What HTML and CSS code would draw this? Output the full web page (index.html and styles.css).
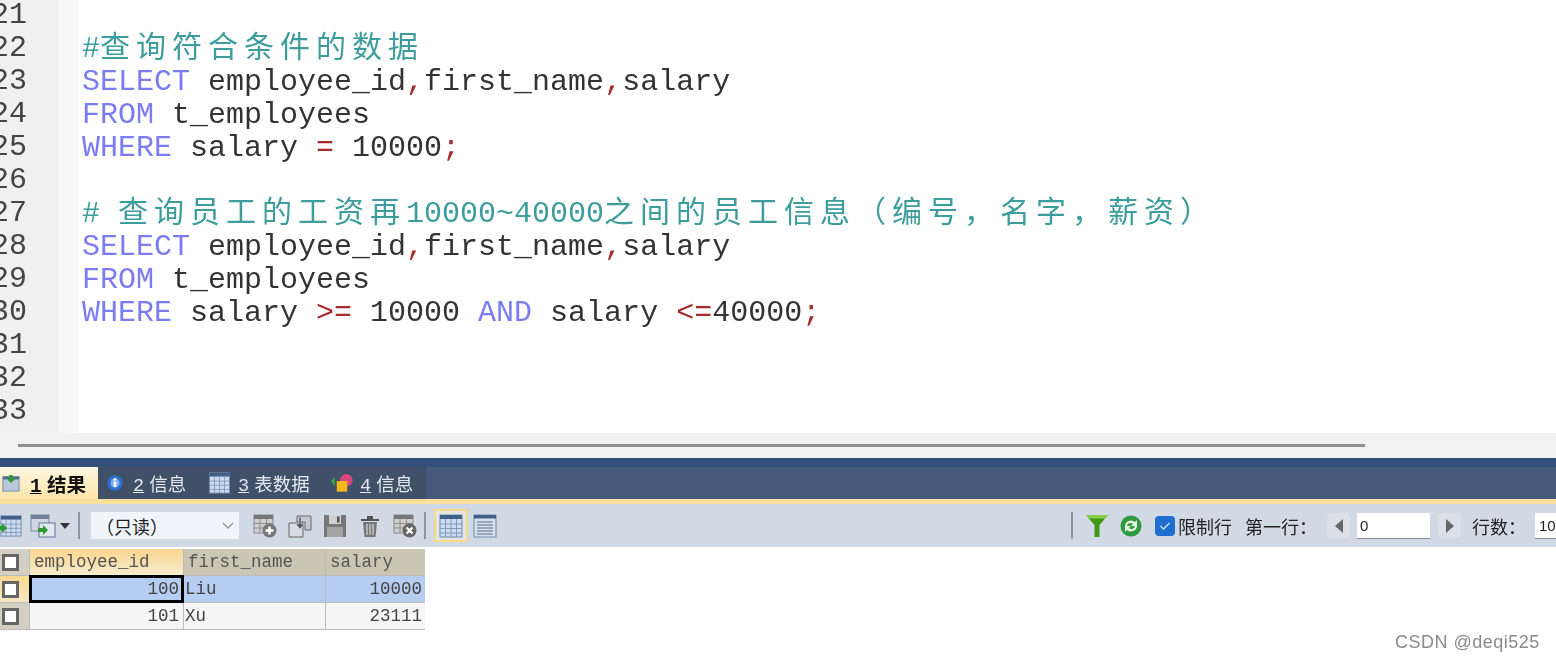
FILE: index.html
```html
<!DOCTYPE html>
<html lang="zh">
<head>
<meta charset="utf-8">
<title>SQL</title>
<link rel="stylesheet" href="styles.css">
</head>
<body>
<svg class="defs" width="0" height="0" aria-hidden="true">
  <defs>
    <symbol id="grid" viewBox="0 0 24 24">
      <rect x="1" y="1" width="22" height="22" fill="#cfdcef" stroke="#6f8aad"/>
      <rect x="1" y="1" width="22" height="4" fill="#3f6088"/>
      <path d="M1 10h22M1 14.500h22M1 19h22M6.500 5v18M12 5v18M17.500 5v18" stroke="#7f9bc0" fill="none"/>
    </symbol>
    <symbol id="lines" viewBox="0 0 24 24">
      <rect x="1" y="1" width="22" height="22" fill="#d6e0ee" stroke="#6f8aad"/>
      <rect x="1" y="1" width="22" height="3.500" fill="#3f6088"/>
      <path d="M4 8h16M4 11h16M4 14h16M4 17h16M4 20h16" stroke="#5d6f88" fill="none"/>
    </symbol>
    <symbol id="gray-grid" viewBox="0 0 24 24">
      <rect x="1" y="1" width="19" height="18" fill="#cfcfcf" stroke="#8a8a8a"/>
      <rect x="1" y="1" width="19" height="4" fill="#777"/>
      <path d="M1 9.500h19M1 14h19M7 5v14M13.500 5v14" stroke="#8f8f8f" fill="none"/>
    </symbol>
  </defs>
</svg>

<main class="app">
  <section class="editor">
    <div class="gutter">
      <div class="nums">
        <div>21</div><div>22</div><div>23</div><div>24</div><div>25</div><div>26</div><div>27</div>
        <div>28</div><div>29</div><div>30</div><div>31</div><div>32</div><div>33</div>
      </div>
    </div>
    <div class="fold"></div>
    <div class="code">
      <div class="line"></div>
      <div class="line cm">#<span class="cjk">查询符合条件的数据</span></div>
      <div class="line"><b class="kw">SELECT</b> employee_id<i class="pn">,</i>first_name<i class="pn">,</i>salary</div>
      <div class="line"><b class="kw">FROM</b> t_employees</div>
      <div class="line"><b class="kw">WHERE</b> salary <i class="pn">=</i> 10000<i class="pn">;</i></div>
      <div class="line"></div>
      <div class="line cm"># <span class="cjk">查询员工的工资再</span>10000~40000<span class="cjk">之间的员工信息（编号，名字，薪资）</span></div>
      <div class="line"><b class="kw">SELECT</b> employee_id<i class="pn">,</i>first_name<i class="pn">,</i>salary</div>
      <div class="line"><b class="kw">FROM</b> t_employees</div>
      <div class="line"><b class="kw">WHERE</b> salary <i class="pn">&gt;=</i> 10000 <b class="kw">AND</b> salary <i class="pn">&lt;=</i>40000<i class="pn">;</i></div>
      <div class="line"></div>
      <div class="line"></div>
      <div class="line"></div>
    </div>
  </section>

  <div class="splitter"><div class="split-line"></div></div>

  <section class="results">
    <div class="navy"></div>
    <nav class="tabs">
      <div class="tab active tab-1">
        <svg class="tab-icon" viewBox="0 0 20 20"><rect x="1" y="3" width="18" height="16" fill="#b9c7da" stroke="#6f8aad"/><rect x="1" y="3" width="18" height="3" fill="#4e6d94"/><path d="M8 1h4v4h3l-5 5-5-5h3z" fill="#2f9a2f"/></svg>
        <span><u>1</u> 结果</span>
      </div>
      <div class="tab tab-2">
        <svg class="tab-icon" viewBox="0 0 20 20"><circle cx="10" cy="10" r="8.500" fill="#2e6fd0"/><circle cx="10" cy="10" r="5" fill="#7fb0ee"/><rect x="8.600" y="8.500" width="2.800" height="6" fill="#fff"/><circle cx="10" cy="6" r="1.600" fill="#fff"/></svg>
        <span><u>2</u> 信息</span>
      </div>
      <div class="tab tab-3">
        <svg class="tab-icon wide"><use href="#grid"/></svg>
        <span><u>3</u> 表数据</span>
      </div>
      <div class="tab tab-4">
        <svg class="tab-icon wide" viewBox="0 0 24 20"><path d="M0 8l4-4v10z" fill="#3aa83a"/><circle cx="16" cy="7" r="6.500" fill="#d8487a"/><rect x="6" y="8" width="11" height="11" fill="#f2b81e"/></svg>
        <span><u>4</u> 信息</span>
      </div>
    </nav>
    <div class="tab-rule"></div>

    <div class="toolbar">
      <div class="left-tools">
        <svg class="ico first" viewBox="0 0 25 24"><use href="#grid" x="3" width="22" height="24"/><path d="M0 12h5v-3l5 5-5 5v-3H0z" fill="#2f9a2f"/></svg>
        <svg class="ico second" viewBox="0 0 26 24"><rect x="1" y="1" width="18" height="16" fill="#cfd6e2" stroke="#7a8ba3"/><rect x="1" y="1" width="18" height="4" fill="#6f7f96"/><rect x="9" y="9" width="16" height="14" fill="#e3e8f0" stroke="#5c7597"/><path d="M8 14h5v-3l5 5-5 5v-3H8z" fill="#2f9a2f"/></svg>
        <span class="caret"></span>
        <span class="sep"></span>
        <div class="select"><span>（只读）</span><svg class="chev" viewBox="0 0 12 7"><path d="M1 1l5 5 5-5" fill="none" stroke="#8a93a3" stroke-width="1.300"/></svg></div>
        <div class="edit-tools">
          <svg class="ico"><use href="#gray-grid"/><circle cx="16.500" cy="16.500" r="7" fill="#777"/><path d="M16.500 12.500v8M12.500 16.500h8" stroke="#fff" stroke-width="2.400"/></svg>
          <svg class="ico" viewBox="0 0 24 24"><path d="M9 2h14v14h-6v-8H9z" fill="#c4c8ce" stroke="#666"/><path d="M1 9h14v14H1z" fill="#d8dbe0" stroke="#666"/><path d="M11 3v7h-3l4 5 4-5h-3V3z" fill="#555" stroke="#d0d8e4" stroke-width=".5"/></svg>
          <svg class="ico" viewBox="0 0 24 24"><path d="M1 1h22v22H1z" fill="#777"/><path d="M6 1h12v9H6z" fill="#cfcfcf"/><rect x="14" y="2.500" width="2.500" height="6" fill="#555"/><path d="M4 13h16v10H4z" fill="#a5a5a5"/></svg>
          <svg class="ico" viewBox="0 0 24 24"><path d="M3 5h18v2H3zM9 2h6v3H9z" fill="#555"/><path d="M5 8h14l-1.500 15h-11z" fill="#777"/><path d="M9 10v11M12 10v11M15 10v11" stroke="#ddd" stroke-width="1.200"/></svg>
          <svg class="ico"><use href="#gray-grid"/><circle cx="16.500" cy="16.500" r="7" fill="#666"/><path d="M13.500 13.500l6 6M19.500 13.500l-6 6" stroke="#fff" stroke-width="2.200"/></svg>
        </div>
        <span class="sep sep-2"></span>
        <div class="toggle"><svg class="ico"><use href="#grid"/></svg></div>
        <svg class="ico form"><use href="#lines"/></svg>
      </div>

      <div class="right-tools">
        <span class="sep"></span>
        <svg class="funnel" viewBox="0 0 24 24"><path d="M1 1h22l-8.500 10v12h-5V11z" fill="#3f9a17"/><path d="M1 1h22l-3 3.500H4z" fill="#86cf4a"/></svg>
        <svg class="refresh" viewBox="0 0 22 22"><circle cx="11" cy="11" r="10.500" fill="#2f9a3f"/><path d="M5 11a6 6 0 0 1 10-4l2-2v6h-6l2-2a3.500 3.500 0 0 0-6 2zM17 11a6 6 0 0 1-10 4l-2 2v-6h6l-2 2a3.500 3.500 0 0 0 6-2z" fill="#e6f6e2"/></svg>
        <span class="check"><svg viewBox="0 0 12 10"><path d="M1.500 5l3 3 6-6" fill="none" stroke="#cfe2fb" stroke-width="1.300"/></svg></span>
        <span class="label">限制行</span>
        <span class="label first-row">第一行：</span>
        <span class="pager"><span class="tri left"></span></span>
        <span class="input">0</span>
        <span class="pager"><span class="tri right"></span></span>
        <span class="label rows">行数：</span>
        <span class="input rows-input">100</span>
      </div>
    </div>

    <div class="table">
      <div class="hc corner"><span class="box"></span></div>
      <div class="hc hot">employee_id</div>
      <div class="hc">first_name</div>
      <div class="hc">salary</div>

      <div class="hc mark"><span class="box"></span></div>
      <div class="td sel focus num">100</div>
      <div class="td sel">Liu</div>
      <div class="td sel num">10000</div>

      <div class="hc corner"><span class="box"></span></div>
      <div class="td num row-2-id">101</div>
      <div class="td">Xu</div>
      <div class="td num">23111</div>
    </div>
  </section>
</main>
<div class="watermark">CSDN @deqi525</div>
</body>
</html>
```
FILE: styles.css
```css
* { box-sizing: border-box; }
html, body { margin: 0; height: 100%; background: #fff; overflow: hidden; }
body { position: relative; }
.defs { position: absolute; }
.app { width: 1556px; height: 662px; overflow: hidden; filter: blur(0.45px); font-family: "Liberation Sans", "Noto Sans CJK SC", sans-serif; }

/* editor */
.editor { display: flex; height: 433px; overflow: hidden; font: 30px/33px "Liberation Mono", "Noto Sans CJK SC", monospace; }
.gutter { width: 58px; flex: none; background: #f0f0f0; color: #444; overflow: hidden; }
.nums { margin: -1px 0 0 -9px; }
.fold { width: 21px; flex: none; background: #f7f7f7; }
.code { flex: 1; padding-left: 3px; color: #333; }
.line { height: 33px; white-space: pre; }
.kw { font-weight: normal; color: #7c7cf2; }
.pn { font-style: normal; color: #a82a2a; }
.cm { color: #3d9c9c; }
.cjk { font-family: "Noto Sans CJK SC", sans-serif; font-size: 30px; letter-spacing: 6px; line-height: 0; }

/* splitter */
.splitter { height: 25px; background: #f1f1f1; padding: 11px 191px 0 18px; }
.split-line { height: 3px; background: #8f8f8f; }

/* results */
.navy { height: 9px; background: #33507a; }
.tabs { display: flex; height: 32px; background: #45597c; color: #e4e8ee; font-size: 18.500px; }
.tab { display: flex; align-items: center; height: 32px; background: #3f5068; }
.tab u { font-family: "Liberation Mono", monospace; }
.tab.active { background: linear-gradient(#fff8e4, #fde3a8); color: #111; font-weight: bold; font-size: 19.500px; }
.tab-1 { width: 98px; padding-left: 2px; gap: 10px; }
.tab-2 { width: 102px; padding-left: 8px; gap: 9px; }
.tab-3 { width: 122px; padding-left: 8px; gap: 7px; }
.tab-4 { width: 104px; padding-left: 9px; gap: 6px; }
.tab-icon { width: 18px; height: 18px; flex: none; }
.tab-icon.wide { width: 23px; height: 22px; }
.tab-rule { height: 5px; background: #fbdf9c; }

.toolbar { display: flex; align-items: center; height: 43px; background: #d1d9e5; overflow: hidden; }
.left-tools { display: flex; align-items: center; flex: none; width: 1071px; font-size: 18px; }
.ico { width: 24px; height: 24px; flex: none; }
.ico.first { width: 25px; margin-left: -3px; }
.ico.second { width: 26px; margin-left: 8px; }
.caret { width: 0; height: 0; margin-left: 4px; border: 5px solid transparent; border-top: 6px solid #333; border-bottom: 0; }
.sep { width: 2px; height: 27px; flex: none; margin-left: 8px; background: #8b95a3; }
.select { display: flex; align-items: center; justify-content: space-between; width: 148px; height: 27px; margin-left: 11px; padding: 0 5px 0 5px; background: #f1f4f9; color: #222; }
.chev { width: 12px; height: 7px; }
.edit-tools { display: flex; gap: 11px; margin-left: 14px; }
.sep-2 { margin-left: 7px; }
.toggle { display: flex; align-items: center; justify-content: center; width: 34px; height: 33px; margin-left: 8px; background: #e4e6e2; border: 2px solid #f7d98c; }
.form { margin-left: 5px; }

.right-tools { display: flex; align-items: center; flex: none; width: 485px; overflow: hidden; font-size: 18px; color: #222; }
.right-tools .sep { margin-left: 0; }
.funnel { width: 24px; height: 24px; margin-left: 12px; flex: none; }
.refresh { width: 22px; height: 22px; margin-left: 11px; flex: none; }
.check { display: flex; align-items: center; justify-content: center; width: 20px; height: 20px; margin-left: 13px; border-radius: 4px; background: #1e6fd0; flex: none; }
.check svg { width: 12px; height: 10px; }
.label { margin-left: 3px; white-space: nowrap; flex: none; }
.first-row { margin-left: 13px; }
.pager { display: flex; align-items: center; justify-content: center; width: 23px; height: 25px; border-radius: 4px; background: #dbe0e8; flex: none; margin-left: 10px; }
.input + .pager { margin-left: 8px; }
.tri { width: 0; height: 0; border: 7px solid transparent; }
.tri.left { border-left: 0; border-right: 8px solid #666; }
.tri.right { border-right: 0; border-left: 8px solid #666; }
.input { width: 73px; height: 26px; margin-left: 7px; padding-left: 3px; background: #fff; border-bottom: 1px solid #888; font: 15px/26px "Liberation Sans", sans-serif; flex: none; }
.rows { margin-left: 11px; }
.rows-input { margin-left: 9px; padding-left: 4px; }

/* grid */
.table { display: grid; grid-template-columns: 29px 153px 141px 99px; grid-auto-rows: 26px; gap: 1px; width: 425px; margin-top: 2px; background: #bcbcbc; border-bottom: 1px solid #bcbcbc; border-right: 1px solid #bcbcbc; font: 17.500px/27px "Liberation Mono", monospace; color: #444; }
.hc { padding-left: 4px; background: #c9c6b3; color: #555; white-space: nowrap; }
.hc.hot { background: linear-gradient(#fbd58e, #f5eccd); }
.hc.corner { display: flex; align-items: center; background: #d3d0c3; padding-left: 2px; }
.hc.mark { display: flex; align-items: center; background: linear-gradient(#fcd88f, #f3e7c3); padding-left: 2px; }
.box { display: block; width: 17px; height: 17px; background: #fff; border: 3px solid #666; }
.td { padding: 0 3px 0 1px; background: #f5f5f5; white-space: nowrap; }
.td.sel { background: #b5cdf0; }
.td.num { text-align: right; }
.td.focus { outline: 3px solid #000; outline-offset: -2px; padding-right: 4px; }
.td.row-2-id { padding-right: 4px; }

.watermark { position: absolute; left: 1395px; top: 632px; font: 18px/20px "Liberation Sans", sans-serif; letter-spacing: 0.5px; color: #8a8a8a; }
```
